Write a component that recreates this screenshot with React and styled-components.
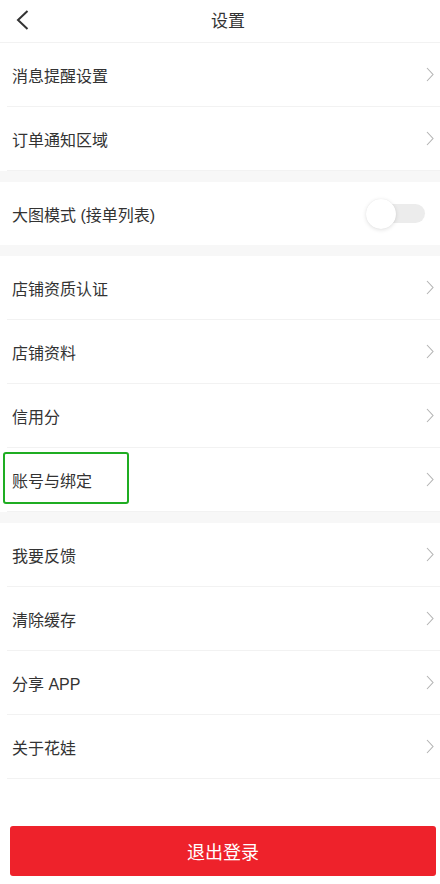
import styled, { createGlobalStyle } from "styled-components";

const GlobalStyle = createGlobalStyle`
  * { box-sizing: border-box; }
  html, body { margin: 0; padding: 0; background: #fff; }
  body {
    font-family: "Liberation Sans", "Noto Sans CJK SC", sans-serif;
    color: #333;
  }
`;

const Page = styled.div`
  width: 440px;
  min-height: 884px;
  background: #fff;
`;

const Header = styled.header`
  height: 43px;
  padding-bottom: 3px;
  border-bottom: 1px solid #f2f2f2;
  display: grid;
  grid-template-columns: 60px 1fr 60px;
  align-items: center;
`;

const Back = styled.div`
  padding-left: 16px;
  display: flex;
  align-items: center;
`;

const Title = styled.h1`
  margin: 0;
  text-align: center;
  font-size: 17px;
  font-weight: normal;
  padding-left: 16px;
  color: #333;
`;

const Group = styled.section`
  background: #fff;
`;

const Gap = styled.div`
  height: 11px;
  background: #f7f7f7;
`;

const Row = styled.div`
  position: relative;
  height: ${(p) => p.$h || 64}px;
  margin-left: 7px;
  padding: 0 6px 0 5px;
  display: flex;
  align-items: center;
  justify-content: space-between;
  border-bottom: ${(p) => (p.$noLine ? "none" : "1px solid #f2f2f2")};
  font-size: 16px;
  color: #333;
`;

const Highlight = styled.div`
  position: absolute;
  left: -4px;
  top: 4px;
  width: 126px;
  height: 52px;
  border: 2px solid #1fad22;
  border-radius: 3px;
`;

const Switch = styled.div`
  position: relative;
  width: 58px;
  height: 30px;
  margin-right: 7px;
  display: flex;
  align-items: center;
`;

const Track = styled.div`
  margin-left: 2px;
  width: 54px;
  height: 19px;
  border-radius: 10px;
  background: #ececec;
`;

const Knob = styled.div`
  position: absolute;
  left: -3px;
  top: 0;
  width: 30px;
  height: 30px;
  border-radius: 50%;
  background: #fff;
  box-shadow: 0 1px 4px rgba(0, 0, 0, 0.12), 0 0 1px rgba(0, 0, 0, 0.08);
`;

const Logout = styled.button`
  display: block;
  margin: 47px 4px 0 10px;
  width: 426px;
  height: 50px;
  border: none;
  border-radius: 3px;
  background: #ee222b;
  color: #fff;
  font-family: inherit;
  font-size: 18px;
`;

const Chevron = () => (
  <svg width="8" height="15" viewBox="0 0 8 15">
    <path d="M1 1 L7 7.5 L1 14" fill="none" stroke="#b3b3b3" strokeWidth="1.1" />
  </svg>
);

const groups = [
  ["消息提醒设置", "订单通知区域"],
  ["店铺资质认证", "店铺资料", "信用分", "账号与绑定"],
  ["我要反馈", "清除缓存", "分享 APP", "关于花娃"],
];

const Item = ({ label }) => (
  <Row>
    {label === "账号与绑定" && <Highlight />}
    <span>{label}</span>
    <Chevron />
  </Row>
);

export default function App() {
  return (
    <Page>
      <GlobalStyle />
      <Header>
        <Back>
          <svg width="13" height="20" viewBox="0 0 13 20">
            <path d="M11.5 1 L2 10 L11.5 19" fill="none" stroke="#333" strokeWidth="2" />
          </svg>
        </Back>
        <Title>设置</Title>
        <div />
      </Header>
      <Group>
        {groups[0].map((l) => (
          <Item key={l} label={l} />
        ))}
      </Group>
      <Gap />
      <Group>
        <Row $h={63} $noLine>
          <span>大图模式 (接单列表)</span>
          <Switch>
            <Track />
            <Knob />
          </Switch>
        </Row>
      </Group>
      <Gap />
      <Group>
        {groups[1].map((l) => (
          <Item key={l} label={l} />
        ))}
      </Group>
      <Gap />
      <Group>
        {groups[2].map((l) => (
          <Item key={l} label={l} />
        ))}
      </Group>
      <Logout>退出登录</Logout>
    </Page>
  );
}
